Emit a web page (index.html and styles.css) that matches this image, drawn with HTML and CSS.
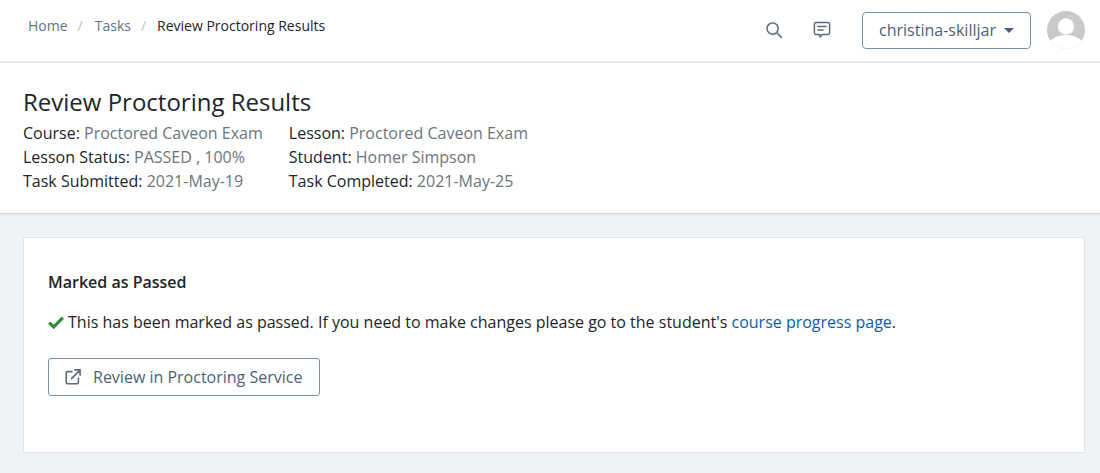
FILE: index.html
```html
<!DOCTYPE html>
<html lang="en">
<head>
<meta charset="utf-8">
<title>Review Proctoring Results</title>
<link rel="stylesheet" href="styles.css">
</head>
<body>
<header class="topbar">
  <nav class="crumbs">
    <a href="#">Home</a><span class="sep">/</span><a href="#">Tasks</a><span class="sep">/</span><span class="current">Review Proctoring Results</span>
  </nav>
  <div class="tools">
    <svg class="icon search" viewBox="0 0 18 18" width="18" height="18" fill="none" stroke="#5c6b7f" stroke-width="1.5" stroke-linecap="round"><circle cx="7.6" cy="7.6" r="5.6"/><path d="M11.8 11.8 16.4 16.4"/></svg>
    <svg class="icon chat" viewBox="0 0 18 18" width="18" height="18" fill="none" stroke="#5c6b7f" stroke-width="1.5" stroke-linejoin="round" stroke-linecap="round"><path d="M2.8 1.6h12.4a1.4 1.4 0 0 1 1.4 1.4v9a1.4 1.4 0 0 1-1.4 1.4H9.4l-2.4 2.6v-2.6H2.8a1.4 1.4 0 0 1-1.4-1.4V3a1.4 1.4 0 0 1 1.4-1.4Z"/><path d="M5 5.6h8M5 9h5"/></svg>
    <button class="user">christina-skilljar<span class="caret"></span></button>
    <svg class="avatar" viewBox="0 0 38 38" width="38" height="38"><defs><clipPath id="av"><circle cx="19" cy="19" r="19"/></clipPath></defs><g clip-path="url(#av)"><rect width="38" height="38" fill="#c9c9c9"/><circle cx="19" cy="15.5" r="8.2" fill="#fff"/><path d="M0 38c0-9 9-14 19-14s19 5 19 14Z" fill="#fff"/></g></svg>
  </div>
</header>
<section class="head">
  <h1>Review Proctoring Results</h1>
  <div class="meta">
    <div class="col">
      <div>Course: <span class="val">Proctored Caveon Exam</span></div>
      <div>Lesson Status: <span class="val">PASSED , 100%</span></div>
      <div>Task Submitted: <span class="val">2021-May-19</span></div>
    </div>
    <div class="col">
      <div>Lesson: <span class="val">Proctored Caveon Exam</span></div>
      <div>Student: <span class="val">Homer Simpson</span></div>
      <div>Task Completed: <span class="val">2021-May-25</span></div>
    </div>
  </div>
</section>
<main class="content">
  <div class="card">
    <h2>Marked as Passed</h2>
    <p class="msg"><svg class="check" viewBox="0 0 16 13" width="16" height="13"><path d="M1.2 6.6 5.7 11 14.9 1.6" fill="none" stroke="#2a9134" stroke-width="3.2"/></svg>This has been marked as passed. If you need to make changes please go to the student's <a href="#">course progress page</a>.</p>
    <button class="review"><svg viewBox="0 0 18 18" width="18" height="18" fill="none" stroke="#5c6b7f" stroke-width="1.6" stroke-linecap="round" stroke-linejoin="round"><path d="M8 3.6H3.8a1.6 1.6 0 0 0-1.6 1.6v9a1.6 1.6 0 0 0 1.6 1.6h9a1.6 1.6 0 0 0 1.6-1.6V10"/><path d="M7.5 10.6 16 2.1M10.8 1.9h5.3v5.3"/></svg>Review in Proctoring Service</button>
  </div>
</main>
</body>
</html>
```
FILE: styles.css
```css
* { box-sizing: border-box; }
html, body { margin: 0; height: 100%; }
body {
  background: #eff3f6;
  font-family: "Open Sans", "Noto Sans", sans-serif;
  font-size: 16px;
  color: #212529;
  overflow: hidden;
}
.topbar {
  height: 63px;
  background: #fff;
  border-bottom: 2px solid #e9e9e9;
  display: flex;
  align-items: flex-start;
  justify-content: space-between;
  padding: 0 15px 0 28px;
}
.crumbs { font-size: 14px; line-height: 20px; padding-top: 16px; }
.crumbs a { color: #5d7290; text-decoration: none; }
.crumbs .sep { color: #b9c3cf; margin: 0 12px 0 10px; }
.crumbs .current { color: #212529; margin-left: -1px; }
.tools { display: flex; align-items: center; height: 60px; }
.icon { display: block; }
.search { margin-right: 30px; }
.chat { margin-right: 31px; }
.user {
  width: 169px;
  height: 37px;
  background: #fff;
  border: 1px solid #7d8fa9;
  border-radius: 4px;
  font: 16px "Open Sans", sans-serif;
  color: #4f5f76;
  padding: 0;
  margin-right: 16px;
}
.caret {
  display: inline-block;
  margin-left: 8px;
  vertical-align: 3px;
  border-top: 5px solid #4f5f76;
  border-left: 5px solid transparent;
  border-right: 5px solid transparent;
}
.avatar { display: block; }
.head {
  height: 151px;
  background: #fff;
  border-bottom: 1px solid #d3d6d9;
  box-shadow: 0 1px 2px rgba(0,0,0,.08);
  padding: 23px 23px 0;
}
h1 { margin: 0 0 3px; font-size: 24px; font-weight: 400; line-height: 32px; color: #212529; }
.meta { display: flex; gap: 26px; line-height: 24px; }
.val { color: #6c757d; }
.content { padding: 23px 15px 0 23px; }
.card {
  height: 216px;
  background: #fff;
  border: 1px solid #e1e5e9;
  padding: 32px 24px 0;
}
h2 { margin: 0 0 16px; font-size: 16px; font-weight: 600; line-height: 24px; color: #212529; }
.msg { margin: 0 0 24px; line-height: 24px; }
.check { margin-right: 4px; vertical-align: -1px; }
.msg a { color: #0b5cad; text-decoration: none; }
.review {
  display: flex;
  align-items: center;
  gap: 11px;
  width: 272px;
  height: 38px;
  padding: 0 0 0 15px;
  background: #fff;
  border: 1px solid #7d8fa9;
  border-radius: 3px;
  font: 16px "Open Sans", sans-serif;
  color: #4f5f76;
}
```
